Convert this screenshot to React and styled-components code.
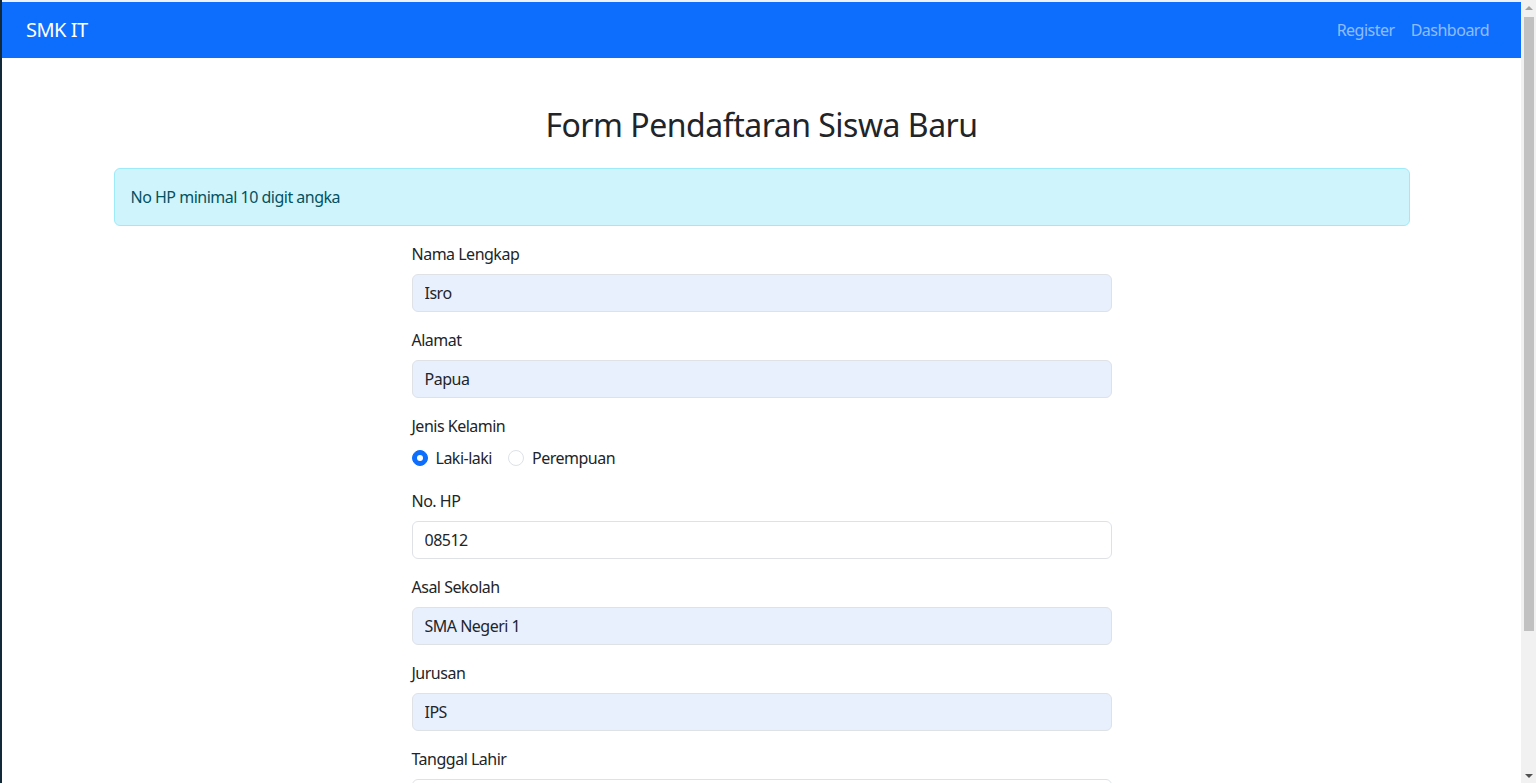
import React from 'react';
import styled, { createGlobalStyle } from 'styled-components';

const GlobalStyle = createGlobalStyle`
  html, body {
    margin: 0;
    padding: 0;
    height: 100%;
    overflow: hidden;
  }
  body {
    font-family: "Noto Sans", "Open Sans", sans-serif;
    letter-spacing: -0.5px;
    color: #212529;
    background: #fff;
  }
  * { box-sizing: border-box; }
`;

const Frame = styled.div`
  display: flex;
  height: 100vh;
  overflow: hidden;
`;

const EdgeStrip = styled.div`
  width: 2px;
  flex-shrink: 0;
  background: #12293a;
`;

const Page = styled.div`
  flex: 1;
  min-width: 0;
  overflow: hidden;
  border-top: 2px solid #eef1f5;
`;

const ScrollTrack = styled.div`
  width: 15px;
  flex-shrink: 0;
  background: #f1f1f1;
  display: flex;
  flex-direction: column;
  align-items: center;
`;

const ScrollArrow = styled.div`
  height: 15px;
  width: 15px;
  display: flex;
  align-items: center;
  justify-content: center;
  &::before {
    content: '';
    border-left: 4px solid transparent;
    border-right: 4px solid transparent;
    ${p => p.down
      ? 'border-top: 4px solid #505050;'
      : 'border-bottom: 4px solid #a3a3a3;'}
  }
`;

const ScrollThumb = styled.div`
  width: 10px;
  height: 614px;
  margin-top: 2px;
  background: #c1c1c1;
`;

const ScrollSpacer = styled.div`
  flex: 1;
`;

const Navbar = styled.nav`
  height: 56px;
  background: #0d6efd;
  display: flex;
  align-items: center;
  justify-content: space-between;
  padding: 0 24px;
`;

const Brand = styled.a`
  color: #fff;
  font-size: 20px;
  text-decoration: none;
  line-height: 30px;
`;

const NavLinks = styled.div`
  display: flex;
`;

const NavLink = styled.a`
  color: rgba(255, 255, 255, 0.55);
  font-size: 16px;
  padding: 8px;
  text-decoration: none;
  line-height: 24px;
`;

const Container = styled.div`
  max-width: 1320px;
  margin: 0 auto;
  padding: 48px 12px 0;
`;

const Title = styled.h2`
  margin: 0 0 24px;
  text-align: center;
  font-size: 32px;
  font-weight: 400;
  line-height: 38px;
  color: #212529;
`;

const Alert = styled.div`
  background: #cff4fc;
  border: 1px solid #9eeaf9;
  color: #055160;
  border-radius: 6px;
  padding: 16px;
  font-size: 16px;
  line-height: 24px;
  margin-bottom: 16px;
`;

const Form = styled.form`
  width: 700px;
  margin: 0 auto;
`;

const Field = styled.div`
  margin-bottom: ${p => (p.$extra ? '19px' : '16px')};
`;

const Label = styled.label`
  display: block;
  margin-bottom: 8px;
  font-size: 16px;
  line-height: 24px;
`;

const Input = styled.input`
  display: block;
  width: 100%;
  height: 38px;
  padding: 6px 12px;
  font-family: inherit;
  letter-spacing: inherit;
  font-size: 16px;
  line-height: 24px;
  color: #212529;
  background: ${p => (p.$autofill ? '#e8f0fe' : '#fff')};
  border: 1px solid #dee2e6;
  border-radius: 6px;
  outline: none;
`;

const RadioRow = styled.div`
  display: flex;
  align-items: center;
  height: 24px;
`;

const RadioOption = styled.label`
  display: flex;
  align-items: center;
  gap: 8px;
  margin-right: 16px;
  font-size: 16px;
  line-height: 24px;
`;

const RadioDot = styled.span`
  width: 16px;
  height: 16px;
  border-radius: 50%;
  flex-shrink: 0;
  border: 1px solid ${p => (p.checked ? '#0d6efd' : '#dee2e6')};
  background: ${p => (p.checked ? '#0d6efd' : '#fff')};
  display: flex;
  align-items: center;
  justify-content: center;
  &::after {
    content: '';
    width: 6px;
    height: 6px;
    border-radius: 50%;
    background: ${p => (p.checked ? '#fff' : 'transparent')};
  }
`;

const fields = [
  { label: 'Nama Lengkap', value: 'Isro', autofill: true },
  { label: 'Alamat', value: 'Papua', autofill: true },
];

const fieldsAfter = [
  { label: 'No. HP', value: '08512', autofill: false },
  { label: 'Asal Sekolah', value: 'SMA Negeri 1', autofill: true },
  { label: 'Jurusan', value: 'IPS', autofill: true },
  { label: 'Tanggal Lahir', value: '', autofill: false },
];

function TextField({ label, value, autofill }) {
  return (
    <Field>
      <Label>{label}</Label>
      <Input type="text" defaultValue={value} $autofill={autofill} readOnly />
    </Field>
  );
}

export default function App() {
  return (
    <>
      <GlobalStyle />
      <Frame>
        <EdgeStrip />
        <Page>
          <Navbar>
            <Brand href="#">SMK IT</Brand>
            <NavLinks>
              <NavLink href="#">Register</NavLink>
              <NavLink href="#">Dashboard</NavLink>
            </NavLinks>
          </Navbar>
          <Container>
            <Title>Form Pendaftaran Siswa Baru</Title>
            <Alert>No HP minimal 10 digit angka</Alert>
            <Form>
              {fields.map(f => (
                <TextField key={f.label} {...f} />
              ))}
              <Field $extra>
                <Label>Jenis Kelamin</Label>
                <RadioRow>
                  <RadioOption>
                    <RadioDot checked />
                    Laki-laki
                  </RadioOption>
                  <RadioOption>
                    <RadioDot />
                    Perempuan
                  </RadioOption>
                </RadioRow>
              </Field>
              {fieldsAfter.map(f => (
                <TextField key={f.label} {...f} />
              ))}
            </Form>
          </Container>
        </Page>
        <ScrollTrack>
          <ScrollArrow />
          <ScrollThumb />
          <ScrollSpacer />
          <ScrollArrow down />
        </ScrollTrack>
      </Frame>
    </>
  );
}
